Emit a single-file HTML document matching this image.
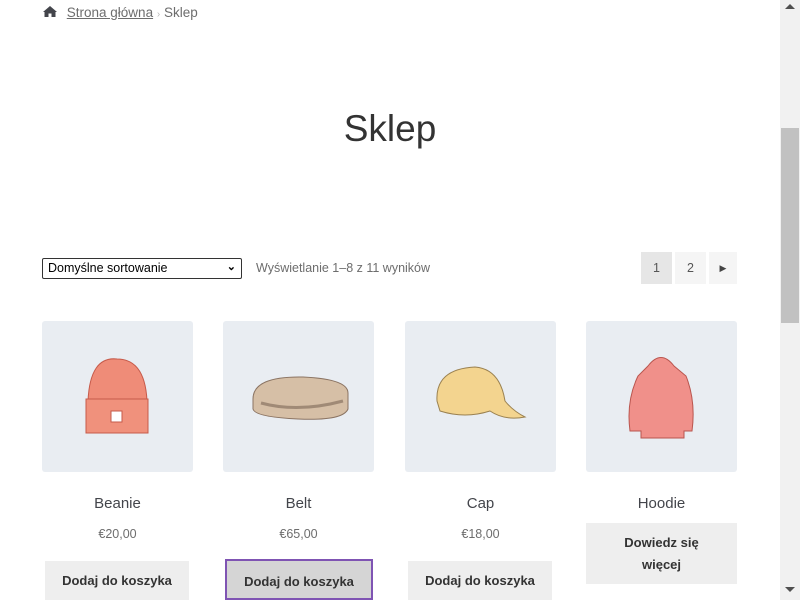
<!DOCTYPE html>
<html><head><meta charset="utf-8"><style>
*{margin:0;padding:0;box-sizing:border-box}
body{width:800px;height:600px;overflow:hidden;background:#fff;font-family:"Liberation Sans",sans-serif;color:#43454b;position:relative}
.a{position:absolute}
.sb{left:780px;top:0;width:20px;height:600px;background:#f1f1f1}
.th{left:781px;top:128px;width:18px;height:195px;background:#c1c1c1}
.card{width:151px;height:151px;background:#e9edf2;top:321px;border-radius:3px}
.nm{width:151px;text-align:center;font-size:15px;top:495px;color:#43454b}
.pr{width:151px;text-align:center;font-size:12.5px;top:527px;color:#6d6d6d}
.btn{background:#eeeeee;font-size:13px;font-weight:bold;color:#333;text-align:center}
</style></head><body>
<div class="a" style="left:42px;top:5px;font-size:13.5px;color:#6d6d6d">
<svg width="16" height="13" viewBox="0 0 16 13" style="vertical-align:-1px"><path d="M8 1 L1 7 L2.5 7 L2.5 12 L6.5 12 L6.5 8.5 L9.5 8.5 L9.5 12 L13.5 12 L13.5 7 L15 7 Z" fill="#43454b"/></svg>
<span style="text-decoration:underline;color:#6d6d6d;margin-left:5px">Strona główna</span> <span style="color:#bbb;font-size:10px">›</span> Sklep</div>
<div class="a" style="left:0;width:780px;top:108px;text-align:center;font-size:37px;font-weight:300;color:#333">Sklep</div>
<div class="a" style="left:42px;top:258px;width:200px;height:21px;border:1px solid #333;border-radius:2px;font-size:12.5px;color:#000;padding:2px 5px">Domyślne sortowanie<span style="position:absolute;right:5px;top:1px;font-size:11px;font-weight:bold">⌄</span></div>
<div class="a" style="left:256px;top:261px;font-size:12.5px;color:#6d6d6d">Wyświetlanie 1–8 z 11 wyników</div>
<div class="a" style="left:641px;top:252px;width:31px;height:32px;background:#e6e6e6;text-align:center;line-height:32px;font-size:12.5px;color:#555">1</div>
<div class="a" style="left:675px;top:252px;width:31px;height:32px;background:#f5f5f5;text-align:center;line-height:32px;font-size:12.5px;color:#555">2</div>
<div class="a" style="left:709px;top:252px;width:28px;height:32px;background:#f5f5f5;text-align:center;line-height:32px;font-size:9px;color:#444">▶</div>

<div class="a card" style="left:42px"><svg width="151" height="151"><path d="M46 80 Q48 35 75 38 Q103 38 105 80 Z" fill="#ef8c78" stroke="#c65a4a"/><rect x="44" y="78" width="62" height="34" fill="#f0917c" stroke="#c65a4a"/><rect x="69" y="90" width="11" height="11" fill="#fff" stroke="#c65a4a"/></svg></div>
<div class="a card" style="left:223px"><svg width="151" height="151"><path d="M30 78 Q30 55 80 56 Q125 58 125 72 L125 88 Q120 100 75 98 Q32 96 30 88 Z" fill="#d6bfa6" stroke="#8a7362"/><path d="M38 82 Q75 92 120 80" stroke="#a08a76" fill="none" stroke-width="3"/></svg></div>
<div class="a card" style="left:405px"><svg width="151" height="151"><path d="M32 80 Q30 48 70 46 Q95 48 100 80 Q108 90 120 96 Q100 100 85 90 Q60 98 35 90 Z" fill="#f3d48f" stroke="#9a8150"/></svg></div>
<div class="a card" style="left:586px"><svg width="151" height="151"><path d="M62 45 Q75 28 88 45 L100 55 Q110 80 106 110 L98 110 L98 117 L55 117 L55 110 L44 110 Q40 80 52 55 Z" fill="#f0908a" stroke="#b9554e"/></svg></div>

<div class="a nm" style="left:42px">Beanie</div><div class="a pr" style="left:42px">€20,00</div>
<div class="a nm" style="left:223px">Belt</div><div class="a pr" style="left:223px">€65,00</div>
<div class="a nm" style="left:405px">Cap</div><div class="a pr" style="left:405px">€18,00</div>
<div class="a nm" style="left:586px">Hoodie</div>
<div class="a btn" style="left:45px;top:561px;width:144px;height:39px;line-height:39px">Dodaj do koszyka</div>
<div class="a btn" style="left:225px;top:559px;width:148px;height:41px;line-height:41px;background:#d5d5d5;border:2px solid #7f54b3">Dodaj do koszyka</div>
<div class="a btn" style="left:408px;top:561px;width:144px;height:39px;line-height:39px">Dodaj do koszyka</div>
<div class="a btn" style="left:586px;top:523px;width:151px;height:61px;line-height:22px;padding-top:9px">Dowiedz się<br>więcej</div>

<div class="a sb"></div><div class="a th"></div>
<div class="a" style="left:785px;top:4px;width:0;height:0;border-left:5px solid transparent;border-right:5px solid transparent;border-bottom:5px solid #505050"></div>
<div class="a" style="left:785px;top:587px;width:0;height:0;border-left:5px solid transparent;border-right:5px solid transparent;border-top:5px solid #505050"></div>
</body></html>
